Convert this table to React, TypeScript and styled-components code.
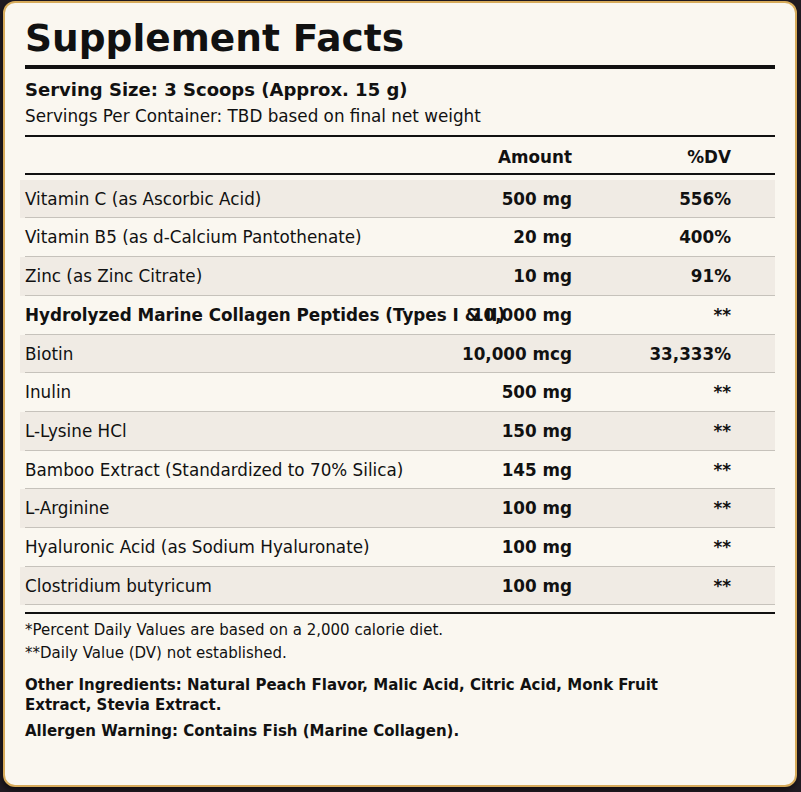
import React from "react";
import styled, { createGlobalStyle } from "styled-components";

const Global = createGlobalStyle`
  html, body, #root { height: 100%; }
  body {
    margin: 0;
    background: #211b22;
    font-family: "DejaVu Sans", Verdana, sans-serif;
    color: #111;
  }
  * { box-sizing: border-box; }
`;

const Page = styled.div`
  height: 100%;
  padding: 1px 4px 5px 3px;
`;

const Card = styled.section`
  height: 100%;
  background: #faf7f0;
  border: 2px solid #d6aa5a;
  border-radius: 12px;
  box-shadow: -1px 3px 6px rgba(0, 0, 0, 0.55);
  padding: 13px 20px 0 20px;
`;

const Title = styled.h1`
  margin: 0;
  font-size: 37.5px;
  font-weight: 700;
  line-height: normal;
  padding-bottom: 5px;
  border-bottom: 4px solid #111;
`;

const Serving = styled.div`
  padding: 9.5px 0 9px;
  border-bottom: 2px solid #111;
`;

const ServingSize = styled.div`
  font-size: 18px;
  font-weight: 700;
  margin-bottom: 6.5px;
`;

const ServingsPer = styled.div`
  font-size: 16.8px;
`;

const Row = styled.div<{ $shaded?: boolean }>`
  display: grid;
  grid-template-columns: minmax(0, 1fr) 140px 159px;
  padding: 0 44px 0 5px;
  margin-left: -5px;
  font-size: 16.8px;
  line-height: 20.7px;
  padding-top: 9px;
  padding-bottom: 9px;
  background:
    linear-gradient(#c6c2bb, #c6c2bb) 5px 100% / calc(100% - 5px) 1px no-repeat,
    ${(p) => (p.$shaded ? "#f0ebe4" : "transparent")};
`;

const HeadRow = styled(Row)`
  font-weight: 700;
  padding-top: 10px;
  padding-bottom: 7px;
  margin-bottom: 5px;
  background: linear-gradient(#111, #111) 5px 100% / calc(100% - 5px) 2px no-repeat;
`;

const Name = styled.span<{ $bold?: boolean }>`
  white-space: nowrap;
  font-weight: ${(p) => (p.$bold ? 700 : 400)};
`;

const Num = styled.span`
  text-align: right;
  font-weight: 700;
  white-space: nowrap;
`;

const Footer = styled.div`
  margin-top: 7px;
  border-top: 2px solid #111;
  padding-top: 5px;
  font-size: 15px;
`;

const Note = styled.p`
  margin: 0;
  line-height: 22.8px;
`;

const Bold = styled.p<{ $gap: number }>`
  margin: ${(p) => p.$gap}px 0 0;
  font-weight: 700;
  line-height: 20px;
  max-width: 660px;
`;

const rows: [string, string, string, boolean?][] = [
  ["Vitamin C (as Ascorbic Acid)", "500 mg", "556%"],
  ["Vitamin B5 (as d-Calcium Pantothenate)", "20 mg", "400%"],
  ["Zinc (as Zinc Citrate)", "10 mg", "91%"],
  ["Hydrolyzed Marine Collagen Peptides (Types I & II)", "10,000 mg", "**", true],
  ["Biotin", "10,000 mcg", "33,333%"],
  ["Inulin", "500 mg", "**"],
  ["L-Lysine HCl", "150 mg", "**"],
  ["Bamboo Extract (Standardized to 70% Silica)", "145 mg", "**"],
  ["L-Arginine", "100 mg", "**"],
  ["Hyaluronic Acid (as Sodium Hyaluronate)", "100 mg", "**"],
  ["Clostridium butyricum", "100 mg", "**"],
];

export default function App() {
  return (
    <>
      <Global />
      <Page>
        <Card>
          <Title>Supplement Facts</Title>
          <Serving>
            <ServingSize>Serving Size: 3 Scoops (Approx. 15 g)</ServingSize>
            <ServingsPer>Servings Per Container: TBD based on final net weight</ServingsPer>
          </Serving>
          <HeadRow>
            <span />
            <Num>Amount</Num>
            <Num>%DV</Num>
          </HeadRow>
          {rows.map(([name, amt, dv, bold], i) => (
            <Row key={name} $shaded={i % 2 === 0}>
              <Name $bold={bold}>{name}</Name>
              <Num>{amt}</Num>
              <Num>{dv}</Num>
            </Row>
          ))}
          <Footer>
            <Note>*Percent Daily Values are based on a 2,000 calorie diet.</Note>
            <Note>**Daily Value (DV) not established.</Note>
            <Bold $gap={10}>
              Other Ingredients: Natural Peach Flavor, Malic Acid, Citric Acid, Monk Fruit Extract, Stevia Extract.
            </Bold>
            <Bold $gap={6}>Allergen Warning: Contains Fish (Marine Collagen).</Bold>
          </Footer>
        </Card>
      </Page>
    </>
  );
}
